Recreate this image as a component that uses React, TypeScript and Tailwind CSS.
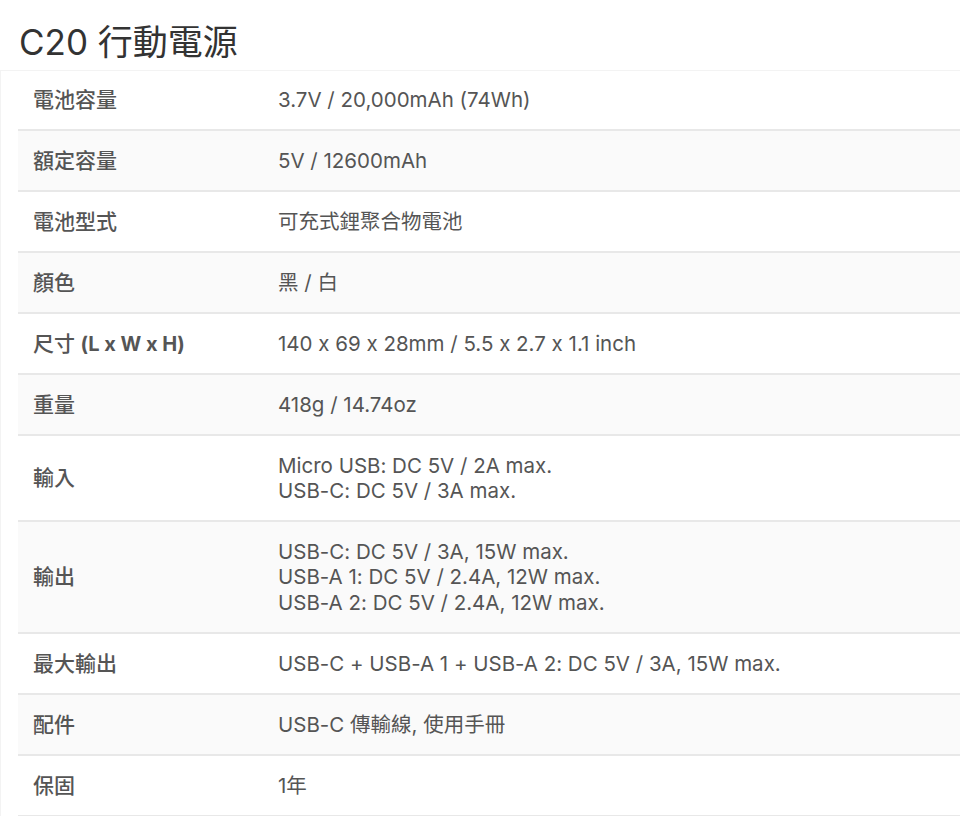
import React from "react";

const rows: { label: React.ReactNode; value: string[]; h: string }[] = [
  { label: "電池容量", value: ["3.7V / 20,000mAh (74Wh)"], h: "h-[60px]" },
  { label: "額定容量", value: ["5V / 12600mAh"], h: "h-[61px]" },
  { label: "電池型式", value: ["可充式鋰聚合物電池"], h: "h-[61px]" },
  { label: "顏色", value: ["黑 / 白"], h: "h-[61px]" },
  {
    label: (
      <>
        尺寸 <span className="font-bold text-[20px]">(L x W x H)</span>
      </>
    ),
    value: ["140 x 69 x 28mm / 5.5 x 2.7 x 1.1 inch"],
    h: "h-[61px]",
  },
  { label: "重量", value: ["418g / 14.74oz"], h: "h-[61px]" },
  {
    label: "輸入",
    value: ["Micro USB: DC 5V / 2A max.", "USB-C: DC 5V / 3A max."],
    h: "h-[86px]",
  },
  {
    label: "輸出",
    value: [
      "USB-C: DC 5V / 3A, 15W max.",
      "USB-A 1: DC 5V / 2.4A, 12W max.",
      "USB-A 2: DC 5V / 2.4A, 12W max.",
    ],
    h: "h-[112px]",
  },
  {
    label: "最大輸出",
    value: ["USB-C + USB-A 1 + USB-A 2: DC 5V / 3A, 15W max."],
    h: "h-[61px]",
  },
  { label: "配件", value: ["USB-C 傳輸線, 使用手冊"], h: "h-[61px]" },
  { label: "保固", value: ["1年"], h: "h-[61px]" },
];

export default function App() {
  return (
    <div
      className="w-[960px] h-[816px] overflow-hidden bg-white text-[#555] [font-feature-settings:'calt'_0]"
      style={{ fontFamily: 'Inter, "Noto Sans CJK TC", sans-serif' }}
    >
      <div className="h-[70px] pl-[19px] pt-[20px]">
        <h1 className="text-[35px] leading-[44px] text-[#333] font-normal">C20 行動電源</h1>
      </div>
      <div className="border-t border-l border-[#f3f3f3] pl-[17px]">
        {rows.map((r, i) => (
          <div
            key={i}
            className={`flex items-center border-b-2 border-[#e8e8e8] ${
              i % 2 === 1 ? "bg-[#fafafa]" : "bg-white"
            } ${r.h}`}
          >
            <div className="w-[260px] shrink-0 pl-[15px] text-[21px] font-medium leading-[26px]">
              {r.label}
            </div>
            <div className="text-[20.5px] leading-[25.5px]">
              {r.value.map((v, j) => (
                <div key={j}>{v}</div>
              ))}
            </div>
          </div>
        ))}
      </div>
    </div>
  );
}
